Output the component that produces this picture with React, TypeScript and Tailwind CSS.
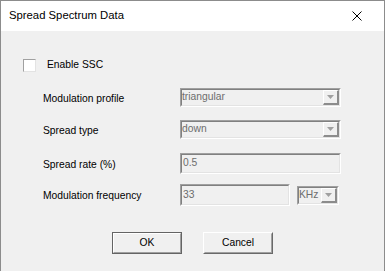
import React from "react";

const font = { fontFamily: '"Liberation Sans", Arial, sans-serif' };

function Arrow() {
  return (
    <svg width="7" height="4" viewBox="0 0 7 4">
      <polygon points="0,0 7,0 3.5,4" fill="#a0a0a0" />
    </svg>
  );
}

function Combo({ text, w, h }: { text: string; w: string; h: string }) {
  return (
    <div className={`${w} ${h} border border-t-[#a0a0a0] border-l-[#a0a0a0] border-r-white border-b-white`}>
      <div className="h-full flex border border-t-[#808080] border-l-[#808080] border-r-[#e3e3e3] border-b-[#e3e3e3] bg-[#f0f0f0]">
        <div className="flex-1 flex items-center text-[10.3px] text-[#6d6d6d] leading-none">{text}</div>
        <div className="w-[16px] h-full flex items-center justify-center border-t border-l border-t-white border-l-white border-r-2 border-b-2 border-r-[#8c8c8c] border-b-[#8c8c8c] bg-[#f0f0f0]">
          <Arrow />
        </div>
      </div>
    </div>
  );
}

function Field({ text, w, h }: { text: string; w: string; h: string }) {
  return (
    <div className={`${w} ${h} border border-t-[#a0a0a0] border-l-[#a0a0a0] border-r-white border-b-white`}>
      <div className="h-full flex items-center border border-t-[#808080] border-l-[#808080] border-r-[#e3e3e3] border-b-[#e3e3e3] bg-[#f0f0f0] pl-[1px] text-[10.3px] text-[#6d6d6d] leading-none">
        {text}
      </div>
    </div>
  );
}

export default function App() {
  return (
    <div
      className="w-[385px] h-[271px] flex flex-col border-t border-l border-r border-[#8c8c8c] overflow-hidden"
      style={font}
    >
      <div className="h-[30px] shrink-0 bg-white flex items-center justify-between pl-[8px] pr-[22px]">
        <span className="text-[11.3px] text-black leading-none">Spread Spectrum Data</span>
        <svg width="10" height="10" viewBox="0 0 10 10">
          <path d="M0.5 0.5 L9.5 9.5 M9.5 0.5 L0.5 9.5" stroke="#000" strokeWidth="1" />
        </svg>
      </div>
      <div className="flex-1 bg-[#f0f0f0] flex flex-col pt-[28px]">
        <div className="flex items-center pl-[22px] h-[13px]">
          <div className="w-[13px] h-[13px] border border-t-[#a0a0a0] border-l-[#a0a0a0] border-r-[#e3e3e3] border-b-[#e3e3e3] bg-white" />
          <span className="ml-[11px] text-[10.3px] text-black leading-none">Enable SSC</span>
        </div>

        <div className="flex flex-col pl-[42px] mt-[16px] text-[10.3px] text-black">
          <div className="flex items-center h-[19px]">
            <span className="w-[137px] pt-[4px] leading-none">Modulation profile</span>
            <Combo text="triangular" w="w-[161px]" h="h-[19px]" />
          </div>
          <div className="flex items-center h-[19px] mt-[13px]">
            <span className="w-[137px] pt-[4px] leading-none">Spread type</span>
            <Combo text="down" w="w-[161px]" h="h-[19px]" />
          </div>
          <div className="flex items-center h-[21px] mt-[14px]">
            <span className="w-[137px] pt-[3px] leading-none">Spread rate (%)</span>
            <Field text="0.5" w="w-[161px]" h="h-[21px]" />
          </div>
          <div className="flex items-center h-[22px] mt-[10px]">
            <span className="w-[137px] pt-[2px] leading-none">Modulation frequency</span>
            <Field text="33" w="w-[110px]" h="h-[22px]" />
            <div className="ml-[7px]">
              <Combo text="KHz" w="w-[42px]" h="h-[19px]" />
            </div>
          </div>
        </div>

        <div className="flex justify-center gap-[21px] mt-[26px]">
          <div className="w-[70px] h-[22px] border border-[#646464]">
            <div className="h-full flex items-center justify-center border border-t-white border-l-white border-r-[#a0a0a0] border-b-[#a0a0a0] bg-[#f0f0f0] text-[10.3px] text-black leading-none">
              OK
            </div>
          </div>
          <div className="w-[70px] h-[22px] border border-t-white border-l-white border-r-[#696969] border-b-[#696969]">
            <div className="h-full flex items-center justify-center border border-t-[#f0f0f0] border-l-[#f0f0f0] border-r-[#a0a0a0] border-b-[#a0a0a0] bg-[#f0f0f0] text-[10.3px] text-black leading-none">
              Cancel
            </div>
          </div>
        </div>
      </div>
    </div>
  );
}
